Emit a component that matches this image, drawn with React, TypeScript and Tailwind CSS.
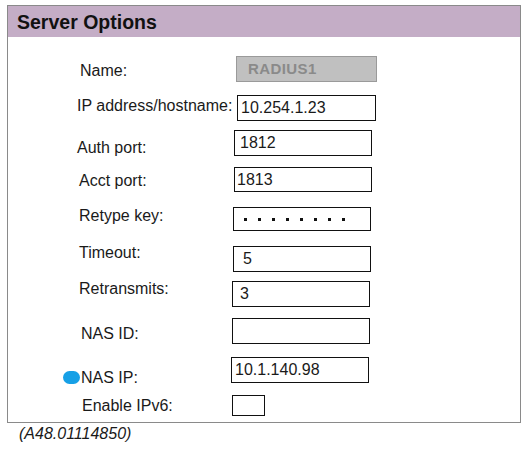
import React from "react";

export default function App() {
  const font = { fontFamily: '"Liberation Sans", Arial, sans-serif' };
  return (
    <div className="w-[526px] h-[451px] bg-white text-[#1a1a1a] pt-[5px] pl-[7px]" style={font}>
      <div className="w-[514px] border border-[#8a8a8a]">
        <div className="h-[31px] bg-[#c4adc6] pl-[9px] pt-[5px] text-[19.5px] leading-[22px] font-bold text-[#111]">
          Server Options
        </div>
        <div className="pt-[19px] text-[16px] leading-[18px]">
          {/* Name */}
          <div className="flex h-[39px]">
            <div className="w-[228px] shrink-0 pl-[72px] mt-[6px]">Name:</div>
            <div className="w-[141px] h-[26px] bg-[#c0c0c0] border border-[#9a9a9a] flex items-center pl-[11px] text-[15px] font-bold text-[#8a8a8a] tracking-[0.4px]">
              RADIUS1
            </div>
          </div>
          {/* IP */}
          <div className="flex h-[35px]">
            <div className="w-[229px] shrink-0 pl-[69px] mt-[2px]">IP address/hostname:</div>
            <div className="w-[139px] h-[26px] border border-[#111] flex items-center pl-[3px]">10.254.1.23</div>
          </div>
          {/* Auth */}
          <div className="flex h-[37px]">
            <div className="w-[226px] shrink-0 pl-[69px] mt-[9px]">Auth port:</div>
            <div className="w-[138px] h-[26px] border border-[#111] flex items-center pl-[5px]">1812</div>
          </div>
          {/* Acct */}
          <div className="flex h-[40px]">
            <div className="w-[226px] shrink-0 pl-[71px] mt-[5px]">Acct port:</div>
            <div className="w-[138px] h-[25px] border border-[#111] flex items-center pl-[2px]">1813</div>
          </div>
          {/* Retype */}
          <div className="flex h-[37px]">
            <div className="w-[225px] shrink-0 pl-[71px]">Retype key:</div>
            <div className="w-[138px] h-[24px] border border-[#111] flex items-center pl-[10px] gap-[11px]">
              <span className="w-[3px] h-[3px] bg-[#111]" />
              <span className="w-[3px] h-[3px] bg-[#111]" />
              <span className="w-[3px] h-[3px] bg-[#111]" />
              <span className="w-[3px] h-[3px] bg-[#111]" />
              <span className="w-[3px] h-[3px] bg-[#111]" />
              <span className="w-[3px] h-[3px] bg-[#111]" />
              <span className="w-[3px] h-[3px] bg-[#111]" />
              <span className="w-[3px] h-[3px] bg-[#111]" />
            </div>
          </div>
          {/* Timeout */}
          <div className="flex h-[36px]">
            <div className="w-[225px] shrink-0 pl-[71px]">Timeout:</div>
            <div className="w-[138px] h-[26px] mt-[2px] border border-[#111] flex items-center pl-[9px]">5</div>
          </div>
          {/* Retransmits */}
          <div className="flex h-[38px]">
            <div className="w-[224px] shrink-0 pl-[71px]">Retransmits:</div>
            <div className="w-[138px] h-[26px] mt-[1px] border border-[#111] flex items-center pl-[7px]">3</div>
          </div>
          {/* NAS ID */}
          <div className="flex h-[39px]">
            <div className="w-[224px] shrink-0 pl-[73px] mt-[7px]">NAS ID:</div>
            <div className="w-[138px] h-[26px] border border-[#111]" />
          </div>
          {/* NAS IP */}
          <div className="flex h-[38px]">
            <div className="w-[223px] shrink-0 pl-[55px] mt-[3px] flex items-center">
              <span className="w-[17px] h-[13px] rounded-full bg-[#16a0e6] mr-[1px]" />
              <span>NAS IP:</span>
            </div>
            <div className="w-[138px] h-[26px] border border-[#111] flex items-center pl-[3px]">10.1.140.98</div>
          </div>
          {/* IPv6 */}
          <div className="flex h-[27px]">
            <div className="w-[224px] shrink-0 pl-[74px] mt-[2px]">Enable IPv6:</div>
            <div className="w-[33px] h-[21px] border border-[#111]" />
          </div>
        </div>
      </div>
      <div className="pl-[12px] mt-[2px] text-[16px] leading-[18px] italic">(A48.01114850)</div>
    </div>
  );
}
